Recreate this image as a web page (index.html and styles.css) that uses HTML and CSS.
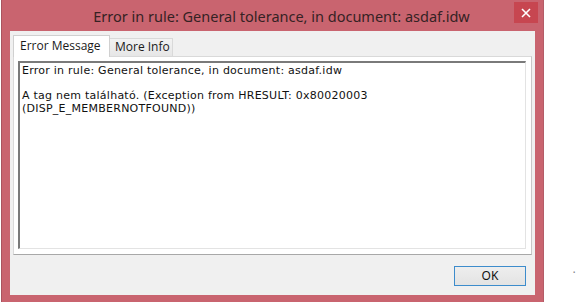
FILE: index.html
```html
<!DOCTYPE html>
<html>
<head>
<meta charset="utf-8">
<link rel="stylesheet" href="styles.css">
</head>
<body>
<div class="page">
  <div class="window">
    <div class="titlebar">
      <div class="title">Error in rule: General tolerance, in document: asdaf.idw</div>
      <div class="close">
        <svg width="10" height="10" viewBox="0 0 10 10"><path d="M1 1 L9 9 M9 1 L1 9" stroke="#fff" stroke-width="1.6" fill="none"/></svg>
      </div>
    </div>
    <div class="client">
      <div class="tabs">
        <div class="tab active">Error Message</div>
        <div class="tab">More Info</div>
      </div>
      <div class="panel">
        <div class="textbox">Error in rule: General tolerance, in document: asdaf.idw<br><br>A tag nem található. (Exception from HRESULT: 0x80020003<br>(DISP_E_MEMBERNOTFOUND))</div>
      </div>
      <div class="footer">
        <button class="ok">OK</button>
      </div>
    </div>
  </div>
  <div class="side"><span class="mark">·</span></div>
</div>
</body>
</html>
```
FILE: styles.css
```css
html, body {
  margin: 0;
  padding: 0;
  background: #ffffff;
  overflow: hidden;
}
.page {
  display: flex;
  width: 576px;
  height: 302px;
}
.window {
  margin-left: 1px;
  width: 543px;
  height: 310px;
  box-sizing: border-box;
  border-left: 1px solid #a9545f;
  border-right: 1px solid #b45c67;
  background: #c9646f;
  padding: 0 6px 0 8px;
  display: flex;
  flex-direction: column;
  flex-shrink: 0;
}
.titlebar {
  height: 31px;
  display: flex;
  align-items: flex-start;
  position: relative;
}
.title {
  flex: 1;
  text-align: center;
  font-family: "Noto Sans", sans-serif;
  font-size: 14.5px;
  color: #352224;
  padding-top: 6px;
  padding-left: 16px;
}
.close {
  position: absolute;
  right: 0;
  top: 2px;
  width: 24px;
  height: 21px;
  margin-right: -1px;
  background: #c74650;
  display: flex;
  align-items: center;
  justify-content: center;
}
.client {
  width: 525px;
  height: 264px;
  background: #f0f0f0;
  box-sizing: border-box;
  padding: 4px 4px 0 3px;
  display: flex;
  flex-direction: column;
}
.tabs {
  display: flex;
  align-items: flex-end;
  height: 21px;
  position: relative;
  z-index: 1;
  font-family: "Open Sans", sans-serif;
  font-size: 12px;
  color: #1a1a1a;
  white-space: nowrap;
}
.tab {
  box-sizing: border-box;
  border: 1px solid #d9d9d9;
  border-bottom: none;
  background: #f0f0f0;
  height: 18px;
  line-height: 16px;
  padding: 0 0 0 5px;
  margin-bottom: 0;
}
.tab.active {
  height: 22px;
  margin-bottom: -1px;
  line-height: 20px;
  background: #ffffff;
  padding: 0 0 0 6px;
  width: 97px;
  border-color: #d0d0d0;
}
.tab:not(.active) {
  width: 63px;
  background: linear-gradient(#f2f2f2, #e6e6e6);
  border-left: none;
}
.panel {
  width: 519px;
  height: 199px;
  box-sizing: border-box;
  border: 1px solid #d9d9d9;
  border-bottom: 1px solid #a8a8a8;
  border-right: 1px solid #c8c8c8;
  background: #ffffff;
  padding: 4px 5px 6px 4px;
}
.textbox {
  box-sizing: border-box;
  width: 508px;
  height: 188px;
  background: #ffffff;
  border-top: 2px solid #7a7a7a;
  border-left: 2px solid #7a7a7a;
  border-right: 1px solid #e3e3e3;
  border-bottom: 1px solid #e3e3e3;
  padding: 2px 2px;
  font-family: "DejaVu Sans", sans-serif;
  font-size: 11px;
  letter-spacing: 0.25px;
  line-height: 12.5px;
  color: #111111;
}
.footer {
  display: flex;
  justify-content: flex-end;
  padding-top: 11px;
  padding-right: 5px;
}
.ok {
  width: 72px;
  height: 20px;
  box-sizing: border-box;
  border: 1px solid #3d8ccc;
  background: linear-gradient(#eeeeee, #e3e3e3);
  font-family: "Noto Sans", sans-serif;
  font-size: 12px;
  color: #111;
  padding: 0;
  line-height: 16px;
}
.side {
  flex: 1;
  position: relative;
}
.mark {
  position: absolute;
  right: 0px;
  top: 266px;
  font-size: 12px;
  color: #888;
  font-family: "DejaVu Sans", sans-serif;
}
```
